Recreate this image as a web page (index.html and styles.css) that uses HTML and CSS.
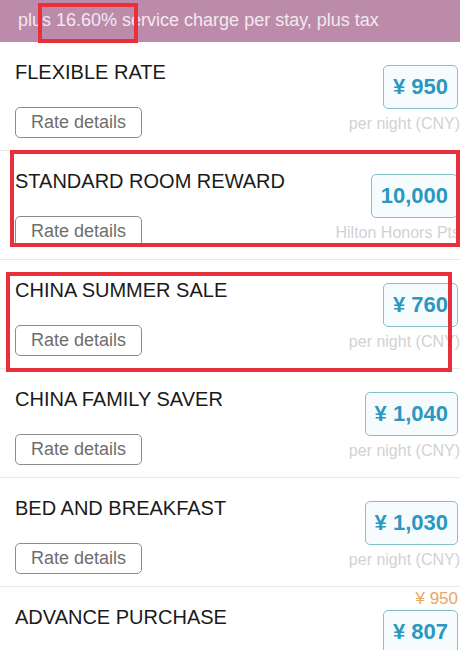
FILE: index.html
```html
<!DOCTYPE html>
<html lang="en">
<head>
  <meta charset="UTF-8" />
  <meta name="viewport" content="width=device-width, initial-scale=1.0"/>
  <title>Room Rates</title>
  <link rel="stylesheet" href="styles.css">
</head>
<body>
  <div class="page">
    <div class="banner">plus 16.60% service charge per stay, plus tax</div>

    <div class="rate">
      <div class="rate-info">
        <div class="rate-name">FLEXIBLE RATE</div>
        <button class="details">Rate details</button>
      </div>
      <div class="price-col">
        <div class="was"></div>
        <div class="price">¥ 950</div>
        <div class="unit">per night (CNY)</div>
      </div>
    </div>

    <div class="rate">
      <div class="rate-info">
        <div class="rate-name">STANDARD ROOM REWARD</div>
        <button class="details">Rate details</button>
      </div>
      <div class="price-col">
        <div class="was"></div>
        <div class="price">10,000</div>
        <div class="unit">Hilton Honors Pts</div>
      </div>
    </div>

    <div class="rate">
      <div class="rate-info">
        <div class="rate-name">CHINA SUMMER SALE</div>
        <button class="details">Rate details</button>
      </div>
      <div class="price-col">
        <div class="was"></div>
        <div class="price">¥ 760</div>
        <div class="unit">per night (CNY)</div>
      </div>
    </div>

    <div class="rate">
      <div class="rate-info">
        <div class="rate-name">CHINA FAMILY SAVER</div>
        <button class="details">Rate details</button>
      </div>
      <div class="price-col">
        <div class="was"></div>
        <div class="price">¥ 1,040</div>
        <div class="unit">per night (CNY)</div>
      </div>
    </div>

    <div class="rate">
      <div class="rate-info">
        <div class="rate-name">BED AND BREAKFAST</div>
        <button class="details">Rate details</button>
      </div>
      <div class="price-col">
        <div class="was"></div>
        <div class="price">¥ 1,030</div>
        <div class="unit">per night (CNY)</div>
      </div>
    </div>

    <div class="rate">
      <div class="rate-info">
        <div class="rate-name">ADVANCE PURCHASE</div>
      </div>
      <div class="price-col">
        <div class="was">¥ 950</div>
        <div class="price">¥ 807</div>
      </div>
    </div>

    <!-- red annotation boxes drawn over the screenshot -->
    <div class="mark mark-charge"></div>
    <div class="mark mark-reward"></div>
    <div class="mark mark-sale"></div>
  </div>
</body>
</html>
```

FILE: styles.css
```css
* { box-sizing: border-box; }
body {
  margin: 0;
  background: #fff;
  font-family: 'Liberation Sans', Arial, sans-serif;
  color: #1a1a1a;
}
.page {
  position: relative;
  width: 465px;
  height: 650px;
  overflow: hidden;
}
.banner {
  height: 42px;
  width: 460px;
  padding-left: 18px;
  line-height: 40px;
  font-size: 18px;
  background: #bd8baa;
  color: #f3e8ef;
}
.rate {
  display: flex;
  justify-content: space-between;
  height: 109px;
  width: 460px;
  padding: 0 2px 0 15px;
  border-bottom: 1px solid #e9e9e9;
}
.rate-info {
  display: flex;
  flex-direction: column;
  align-items: flex-start;
}
.rate-name {
  margin-top: 19px;
  font-size: 20px;
  line-height: 22px;
}
.details {
  margin-top: 24px;
  width: 127px;
  height: 31px;
  padding: 0;
  background: #fff;
  border: 1.5px solid #8c8c8c;
  border-radius: 5px;
  font-family: inherit;
  font-size: 18px;
  color: #6e6e6e;
}
.price-col {
  display: flex;
  flex-direction: column;
  align-items: flex-end;
  padding-top: 5px;
  white-space: nowrap;
}
.was {
  height: 18px;
  margin-top: -2px;
  margin-bottom: 2px;
  line-height: 18px;
  font-size: 17px;
  color: #eaa562;
}
.price {
  height: 44px;
  padding: 0 9px;
  line-height: 41px;
  font-size: 22px;
  font-weight: bold;
  color: #2c97bf;
  background: #f6fcfe;
  border: 1.5px solid #86bfc8;
  border-radius: 5px;
}
.unit {
  margin-top: 6px;
  margin-right: -2px;
  font-size: 16px;
  line-height: 18px;
  color: #d2d2d2;
}
.mark {
  position: absolute;
  border: 4px solid #e8303a;
}
.mark-charge { left: 38px; top: 3px; width: 100px; height: 40px; }
.mark-reward { left: 10px; top: 150px; width: 450px; height: 97px; }
.mark-sale { left: 6px; top: 272px; width: 446px; height: 100px; }
```
